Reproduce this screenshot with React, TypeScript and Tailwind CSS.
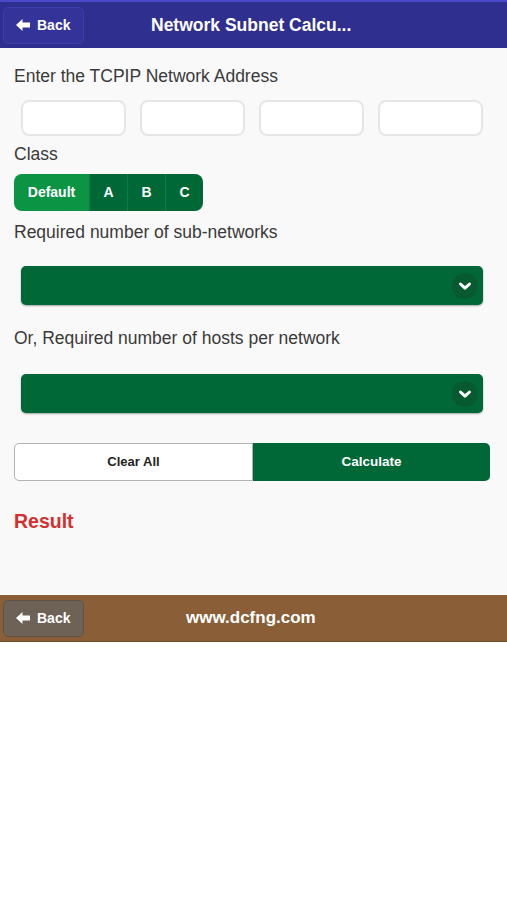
import { useState } from "react";

const FONT = { fontFamily: '"Liberation Sans", Arial, sans-serif' };

function BackButton({ variant }: { variant: "header" | "footer" }) {
  const look =
    variant === "header"
      ? "bg-[#33339a] border-[#3d3dab]"
      : "bg-[#6e6156] border-[#5d5249]";
  return (
    <button
      className={`flex h-[37px] w-[81px] items-center gap-[6px] rounded-[5px] border pl-[11px] text-[14px] font-bold text-white ${look}`}
    >
      <svg width="16" height="16" viewBox="0 0 16 16" className="shrink-0">
        <path d="M1 8 L7.5 2 V5.6 H15 V10.4 H7.5 V14 Z" fill="#ffffff" />
      </svg>
      Back
    </button>
  );
}

function Chevron() {
  return (
    <span className="flex h-[26px] w-[26px] items-center justify-center rounded-full bg-[#075a2f]">
      <svg width="16" height="16" viewBox="0 0 16 16">
        <path
          d="M3.5 6 L8 10.2 L12.5 6"
          stroke="#ffffff"
          strokeWidth="3"
          fill="none"
          strokeLinecap="round"
          strokeLinejoin="round"
        />
      </svg>
    </span>
  );
}

function Select() {
  return (
    <div className="mx-[7px] flex h-[39px] items-center justify-end rounded-[5px] bg-[#006837] pr-[5px] shadow-[0_1px_2px_rgba(0,0,0,0.35)]">
      <Chevron />
    </div>
  );
}

export default function App() {
  const [cls, setCls] = useState("Default");
  const classes = ["Default", "A", "B", "C"];

  return (
    <div className="min-h-[900px] bg-white text-[#3a3a3a]" style={FONT}>
      <header className="flex h-[48px] items-center border-t-[2px] border-[#4848c8] bg-[#2f2f8f] px-[3px]">
        <BackButton variant="header" />
        <h1 className="ml-[67px] text-[17.5px] font-bold text-white">
          Network Subnet Calcu...
        </h1>
      </header>

      <main className="h-[547px] bg-[#f9f9f9] pl-[14px] pr-[17px] pt-[18px]">
        <p className="text-[17.5px] leading-[20px]">Enter the TCPIP Network Address</p>
        <div className="mt-[14px] grid grid-cols-4 gap-[14px] px-[7px]">
          {[0, 1, 2, 3].map((i) => (
            <input
              key={i}
              className="h-[36px] w-full rounded-[8px] border-[2px] border-[#e6e6e6] bg-white outline-none"
            />
          ))}
        </div>

        <p className="mt-[8px] text-[17.5px] leading-[20px]">Class</p>
        <div className="mt-[10px] flex h-[37px] w-[189px] overflow-hidden rounded-[8px] text-[14px] font-bold text-white">
          {classes.map((c, i) => (
            <button
              key={c}
              onClick={() => setCls(c)}
              className={`flex items-center justify-center ${
                i === 0 ? "w-[75px]" : "w-[38px] border-l border-[#0a7d40]"
              } ${cls === c ? "bg-[#0b9444]" : "bg-[#006837]"}`}
            >
              {c}
            </button>
          ))}
        </div>

        <p className="mt-[11px] text-[17.5px] leading-[20px]">Required number of sub-networks</p>
        <div className="mt-[24px]">
          <Select />
        </div>

        <p className="mt-[23px] text-[17.5px] leading-[20px]">Or, Required number of hosts per network</p>
        <div className="mt-[26px]">
          <Select />
        </div>

        <div className="mt-[30px] flex h-[38px]">
          <button className="flex-1 rounded-l-[5px] border border-[#b3b3b3] bg-white text-[13px] font-bold text-[#222]">
            Clear All
          </button>
          <button className="flex-1 rounded-r-[5px] bg-[#006837] text-[13.5px] font-bold text-white">
            Calculate
          </button>
        </div>

        <h2 className="mt-[26px] text-[19.5px] font-bold text-[#d32f2f]">Result</h2>
      </main>

      <footer className="flex h-[47px] items-center border-b-[1px] border-[#6b4a2c] bg-[#8a5f37] px-[3px]">
        <BackButton variant="footer" />
        <span className="ml-[102px] text-[17px] font-bold text-white">www.dcfng.com</span>
      </footer>
    </div>
  );
}
